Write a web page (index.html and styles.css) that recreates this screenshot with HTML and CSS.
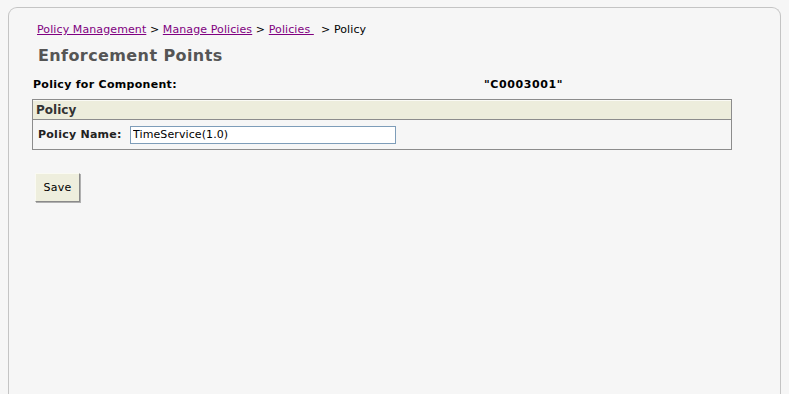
FILE: index.html
```html
<!DOCTYPE html>
<html>
<head>
<meta charset="utf-8">
<link rel="stylesheet" href="styles.css">
</head>
<body>
<div class="panel">
  <div class="crumbs">
    <a href="#">Policy Management</a> &gt; <a href="#">Manage Policies</a> &gt; <a href="#">Policies&nbsp;</a>&nbsp; &gt; Policy
  </div>
  <h1 class="title">Enforcement Points</h1>
  <div class="component">
    <span class="comp-label">Policy for Component:</span>
    <span class="comp-value">"C0003001"</span>
  </div>
  <div class="box">
    <div class="box-head">Policy</div>
    <div class="box-row">
      <label class="field-label">Policy Name:</label>
      <input class="field-input" type="text" value="TimeService(1.0)">
    </div>
  </div>
  <button class="save" type="button">Save</button>
</div>
</body>
</html>
```
FILE: styles.css
```css
html, body {
  margin: 0;
  padding: 0;
  background: #f6f6f6;
  height: 100%;
  overflow: hidden;
}
body {
  font-family: "DejaVu Sans", Verdana, sans-serif;
  font-size: 11px;
  color: #000;
}
.panel {
  margin: 7px 8px 0 8px;
  border: 1px solid #c4c4c4;
  border-bottom: none;
  border-radius: 9px 9px 0 0;
  height: 400px;
  padding: 15px 0 0 23px;
  box-sizing: border-box;
}
.crumbs {
  padding-left: 5px;
  line-height: 14px;
  font-size: 11px;
  letter-spacing: 0.1px;
}
.crumbs a {
  color: #800080;
  text-decoration: underline;
}
.title {
  margin: 9px 0 0 6px;
  font-size: 16px;
  line-height: 20px;
  font-weight: bold;
  color: #555;
  letter-spacing: 0.4px;
}
.component {
  display: flex;
  margin-top: 12px;
  font-weight: bold;
  line-height: 14px;
  padding-left: 1px;
  letter-spacing: 0.3px;
}
.comp-label {
  width: 451px;
}
.comp-value {
  letter-spacing: 0.6px;
}
.box {
  margin-top: 7px;
  width: 700px;
  box-sizing: border-box;
  border: 1px solid #8c8c8c;
}
.box-head {
  background: #ededdc;
  border-top: 1px solid #fafaf5;
  border-bottom: 1px solid #8c8c8c;
  font-weight: bold;
  font-size: 12px;
  color: #333;
  line-height: 18px;
  padding-left: 3px;
}
.box-row {
  display: flex;
  align-items: center;
  padding: 5px 0 5px 5px;
  height: 19px;
}
.field-label {
  font-weight: bold;
  color: #222;
  width: 92px;
  letter-spacing: 0.25px;
}
.field-input {
  width: 266px;
  height: 18px;
  box-sizing: border-box;
  border: 1px solid #7e9db9;
  background: #fff;
  font-family: "DejaVu Sans", Verdana, sans-serif;
  font-size: 11px;
  letter-spacing: 0.1px;
  padding: 0 2px;
  margin: 0;
  outline: none;
}
.save {
  display: block;
  margin: 23px 0 0 3px;
  width: 45px;
  height: 29px;
  background: #eeeedd;
  border: 1px solid;
  border-color: #fafaf2 #8a8a8a #8a8a8a #fafaf2;
  box-shadow: 1px 1px 0 #b0b0b0;
  font-family: "DejaVu Sans", Verdana, sans-serif;
  font-size: 11px;
  letter-spacing: 0.3px;
  color: #000;
  padding: 0;
}
```
